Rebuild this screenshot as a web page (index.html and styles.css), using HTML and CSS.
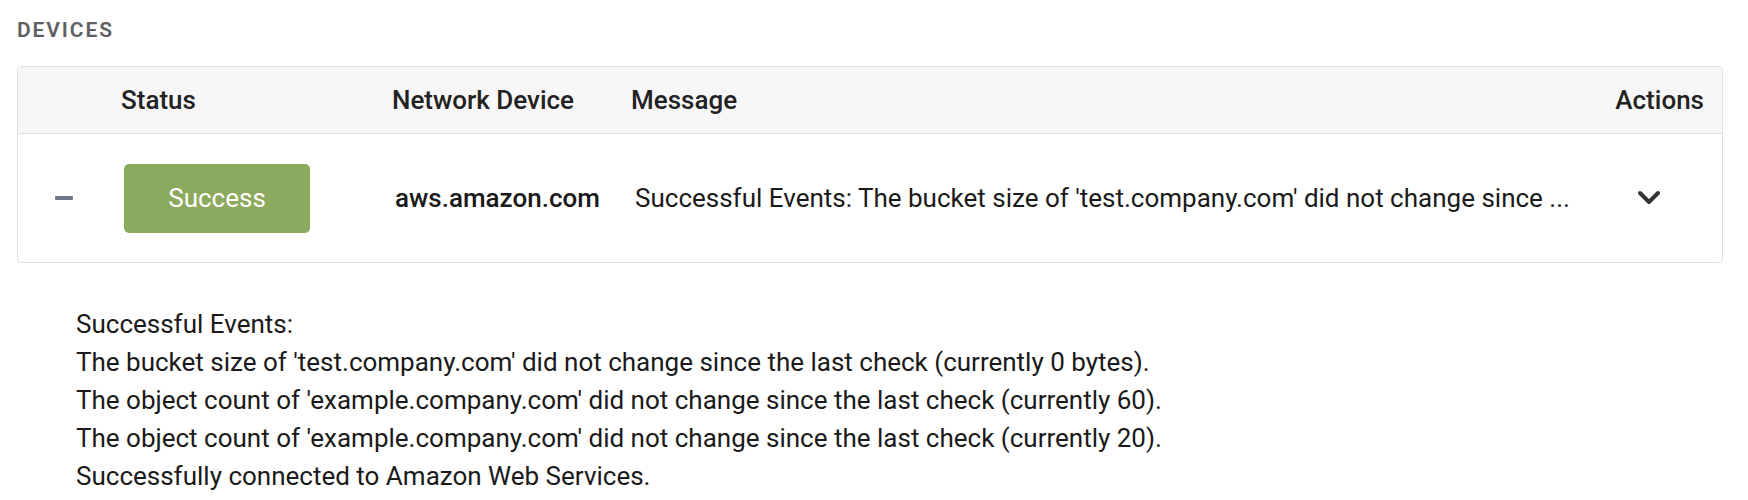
FILE: index.html
```html
<!DOCTYPE html>
<html lang="en">
<head>
<meta charset="utf-8">
<title>Devices</title>
<link rel="stylesheet" href="styles.css">
</head>
<body>
<section class="devices">
  <h2 class="section-title">DEVICES</h2>
  <div class="table">
    <div class="row head">
      <div class="cell toggle"></div>
      <div class="cell">Status</div>
      <div class="cell">Network Device</div>
      <div class="cell">Message</div>
      <div class="cell actions">Actions</div>
    </div>
    <div class="row body">
      <div class="cell toggle"><span class="minus"></span></div>
      <div class="cell status"><span class="badge">Success</span></div>
      <div class="cell device">aws.amazon.com</div>
      <div class="cell msg">Successful Events: The bucket size of 'test.company.com' did not change since ...</div>
      <div class="cell actions">
        <svg class="chevron" width="24" height="16" viewBox="0 0 24 16" aria-hidden="true">
          <polyline points="3,3 12,12 21,3" fill="none" stroke="#333" stroke-width="4" stroke-linecap="round" stroke-linejoin="round"/>
        </svg>
      </div>
    </div>
  </div>
  <div class="details">
    <div>Successful Events:</div>
    <div>The bucket size of 'test.company.com' did not change since the last check (currently 0 bytes).</div>
    <div>The object count of 'example.company.com' did not change since the last check (currently 60).</div>
    <div>The object count of 'example.company.com' did not change since the last check (currently 20).</div>
    <div>Successfully connected to Amazon Web Services.</div>
  </div>
</section>
</body>
</html>
```
FILE: styles.css
```css
html, body {
  margin: 0;
  padding: 0;
  background: #ffffff;
}

body {
  font-family: Roboto, "Liberation Sans", sans-serif;
  color: #1e1e1e;
}

.devices {
  padding: 18px 25px 0 17px;
}

.section-title {
  margin: 0 0 24px 0;
  font-size: 21px;
  line-height: 24px;
  font-weight: 600;
  letter-spacing: 1.9px;
  color: #606060;
}

.table {
  border: 1px solid #e0e0e0;
  border-radius: 4px;
  overflow: hidden;
}

.row {
  display: grid;
  grid-template-columns: 103px 271px 239px 1fr 120px;
  align-items: center;
}

.head {
  height: 66px;
  background: #f7f7f7;
  border-bottom: 1px solid #e0e0e0;
  font-size: 26px;
  font-weight: 500;
  color: #222;
}

.head .actions {
  text-align: right;
  padding-right: 18px;
}

.body {
  height: 128px;
  font-size: 26px;
  color: #1a1a1a;
}

.body .cell {
  padding-left: 3px;
}

.body .msg {
  padding-left: 4px;
}

.cell {
  white-space: nowrap;
  overflow: hidden;
}

.toggle {
  display: flex;
  align-items: center;
}

.minus {
  display: block;
  width: 18px;
  height: 4px;
  margin-left: 34px;
  background: #707b8a;
  border-radius: 1px;
}

.badge {
  display: flex;
  align-items: center;
  justify-content: center;
  width: 186px;
  height: 69px;
  background: #8caa5e;
  color: #ffffff;
  border-radius: 5px;
  font-size: 26px;
}

.device {
  font-weight: 500;
}

.body .actions {
  display: flex;
  justify-content: flex-start;
  padding-left: 35px;
}

.chevron {
  display: block;
}

.details {
  margin-top: 42px;
  padding-left: 59px;
  font-size: 26px;
  line-height: 38px;
  color: #1a1a1a;
}
```
